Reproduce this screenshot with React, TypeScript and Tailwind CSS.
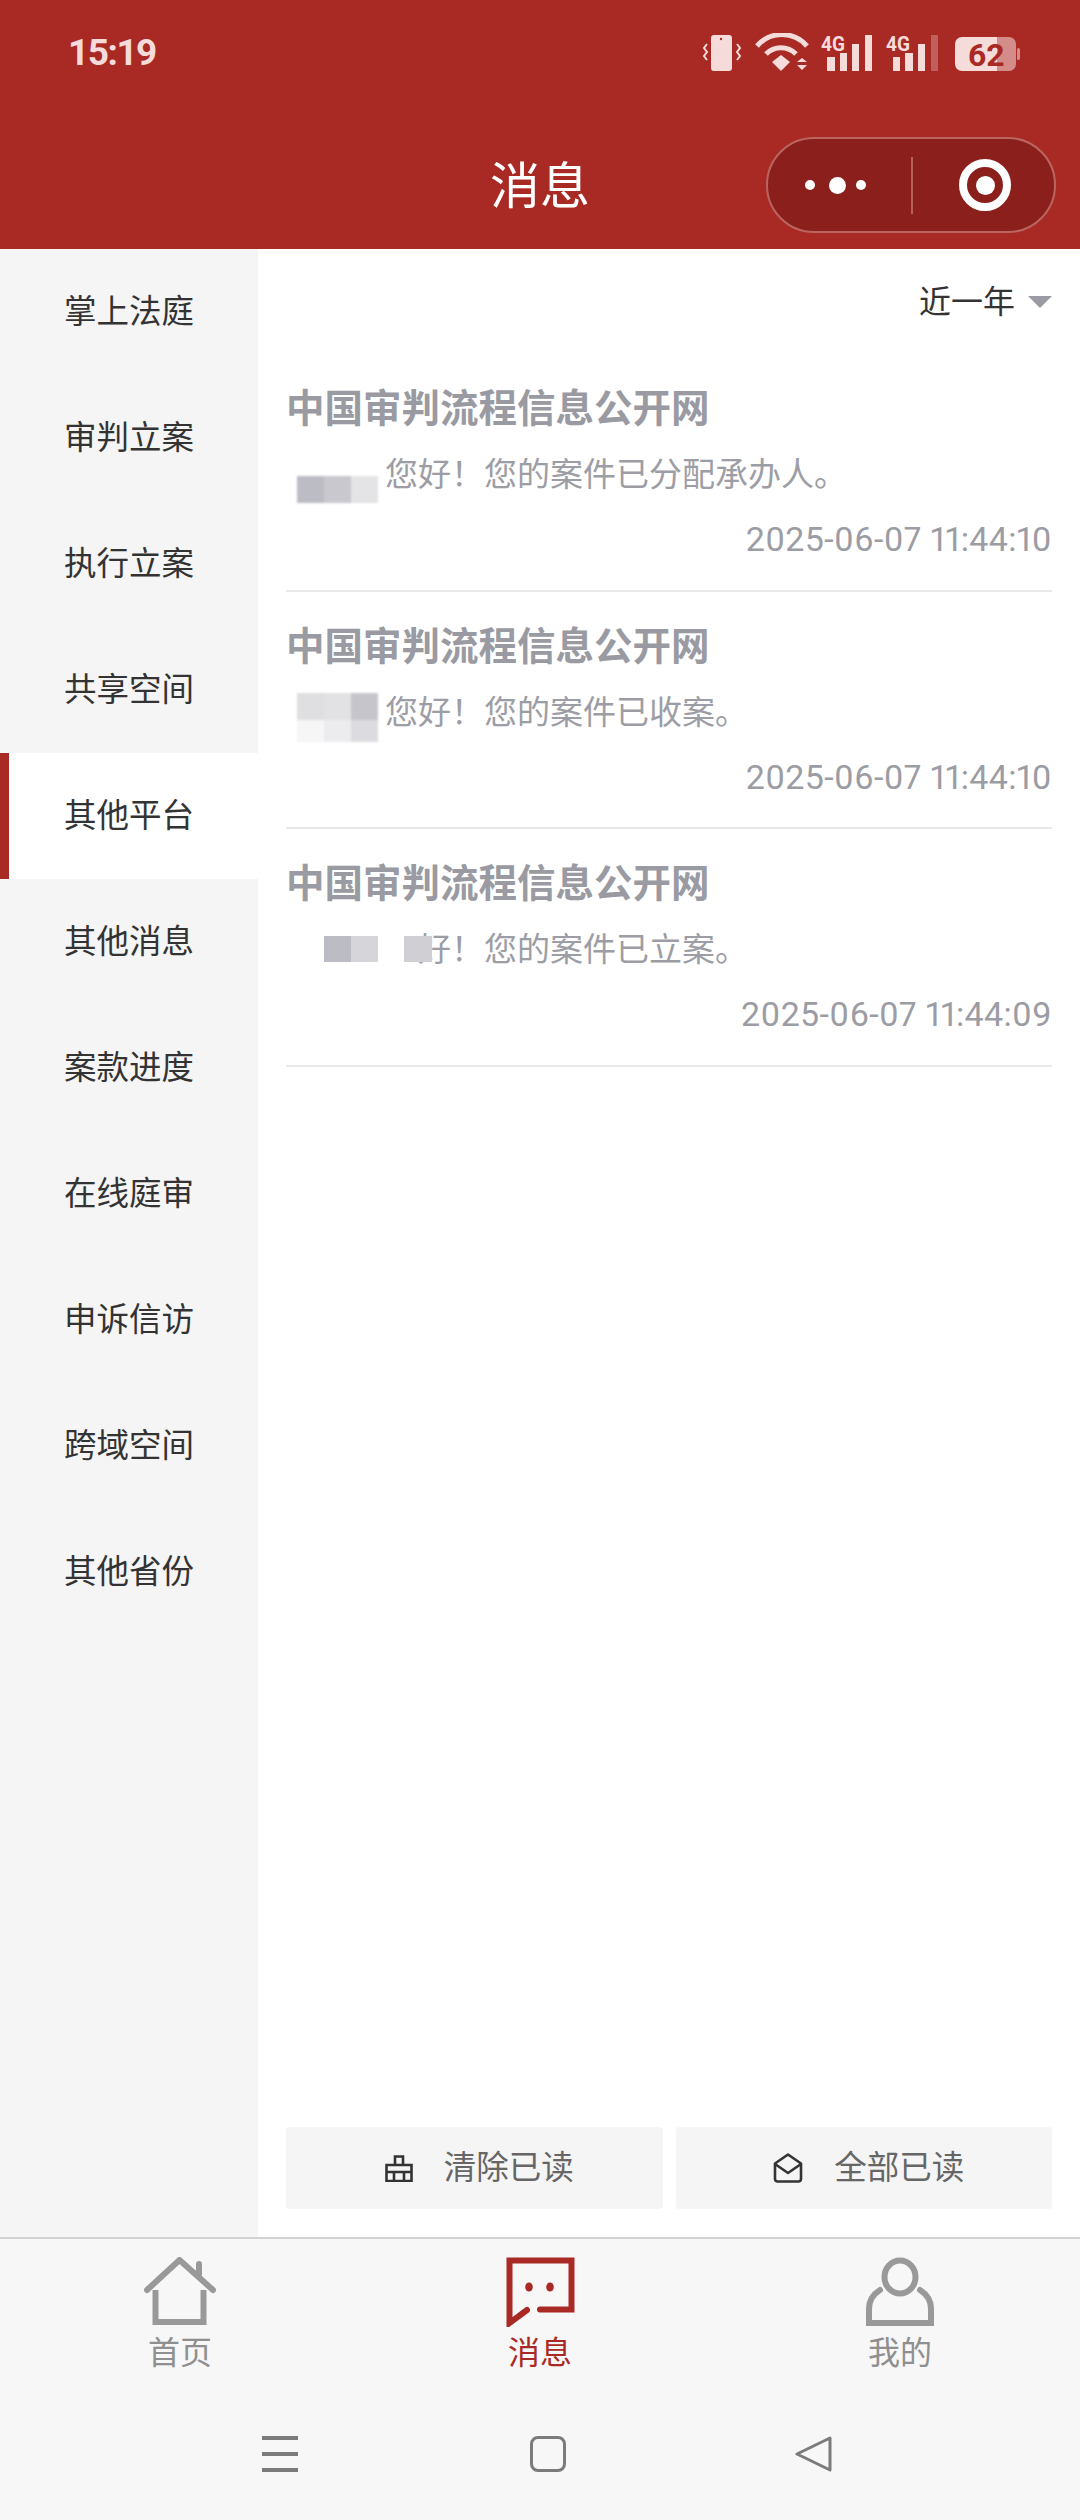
const CJK = 'font-["Noto_Sans_CJK_SC",sans-serif]';

const sideItems = ['掌上法庭', '审判立案', '执行立案', '共享空间', '其他平台', '其他消息', '案款进度', '在线庭审', '申诉信访', '跨域空间', '其他省份'];

function StatusIcons() {
  return (
    <svg width="322" height="40" viewBox="700 33 322 40" className="block">
      <g fill="#f5dcdb">
        {/* vibrate */}
        <rect x="711" y="35" width="21" height="36" rx="3" />
        <circle cx="721" cy="39" r="1.2" fill="#a92a24" />
        <path d="M707 44l-3 4 3 4-3 4 3 4M737 44l3 4-3 4 3 4-3 4" fill="none" stroke="#f5dcdb" strokeWidth="2" />
        {/* wifi */}
        <path d="M757 46a33 33 0 0 1 50 0" fill="none" stroke="#f5dcdb" strokeWidth="5" />
        <path d="M766 54a21 21 0 0 1 30 0" fill="none" stroke="#f5dcdb" strokeWidth="5" />
        <path d="M772 62l9-7 9 7-9 9z" />
        <path d="M802 58l5 4h-10zM802 70l5-5h-10z" />
        {/* signal 1 */}
        <text x="821" y="51" fontSize="20" fontWeight="700" fontFamily="Roboto, sans-serif" textLength="24" lengthAdjust="spacingAndGlyphs">4G</text>
        <rect x="827" y="57" width="8" height="14" />
        <rect x="840" y="53" width="7" height="18" />
        <rect x="852" y="44" width="7" height="27" />
        <rect x="865" y="35" width="7" height="36" />
        {/* signal 2 */}
        <text x="886" y="51" fontSize="20" fontWeight="700" fontFamily="Roboto, sans-serif" textLength="24" lengthAdjust="spacingAndGlyphs">4G</text>
        <rect x="893" y="57" width="7" height="14" />
        <rect x="905" y="53" width="8" height="18" />
        <rect x="918" y="44" width="7" height="27" />
        <rect x="931" y="35" width="7" height="36" opacity="0.3" />
        {/* battery */}
        <path d="M997 37h12a7 7 0 0 1 7 7v20a7 7 0 0 1-7 7h-12z" opacity="0.55" />
        <rect x="1017" y="48" width="3" height="12" rx="1.5" opacity="0.55" />
        <path d="M962 37h35v34h-35a7 7 0 0 1-7-7v-20a7 7 0 0 1 7-7z" />
        <text x="968" y="66" fontSize="32" fontWeight="700" fontFamily="Roboto, sans-serif" fill="#a92a24">62</text>
      </g>
    </svg>
  );
}

function Capsule() {
  return (
    <div className="flex h-[96px] w-[290px] items-center rounded-full border-2 border-[#bb6560] bg-[#8a1f1b]">
      <div className="flex w-[143px] items-center justify-end pr-[45px]">
        <span className="mr-[14px] h-[10px] w-[10px] rounded-full bg-white" />
        <span className="mr-[10px] h-[17px] w-[17px] rounded-full bg-white" />
        <span className="h-[10px] w-[10px] rounded-full bg-white" />
      </div>
      <div className="h-[57px] w-[2px] bg-[#b8605a]" />
      <div className="flex flex-1 items-center justify-center pl-[3px]">
        <div className="flex h-[52px] w-[52px] items-center justify-center rounded-full border-[8px] border-white">
          <span className="h-[19px] w-[19px] rounded-full bg-white" />
        </div>
      </div>
    </div>
  );
}

function Mosaic1() {
  return (
    <div className="absolute left-[11px] top-[26px] flex blur-[1px]">
      <div className="h-[27px] w-[27px] bg-[#bcbcc4]" />
      <div className="h-[27px] w-[27px] bg-[#c8c8ce]" />
      <div className="h-[27px] w-[27px] bg-[#e4e4e6]" />
    </div>
  );
}

function Mosaic2() {
  return (
    <div className="absolute left-[11px] top-[5px] grid grid-cols-[27px_27px_27px] grid-rows-[27px_22px] blur-[1px]">
      <div className="bg-[#dfdfe2]" />
      <div className="bg-[#e2e2e5]" />
      <div className="bg-[#c5c5cb]" />
      <div className="bg-[#f6f6f7]" />
      <div className="bg-[#ececee]" />
      <div className="bg-[#dcdce0]" />
    </div>
  );
}

function Mosaic3() {
  return (
    <div className="absolute left-[38px] top-[11px] flex blur-[0.5px]">
      <div className="h-[26px] w-[27px] bg-[#bcbcc4]" />
      <div className="h-[26px] w-[27px] bg-[#d6d6da]" />
      <div className="h-[26px] w-[26px]" />
      <div className="h-[26px] w-[28px] bg-[#cfcfd4]" />
    </div>
  );
}

const messages = [
  { gap: 'w-[99px]', text: '您好！您的案件已分配承办人。', time: '2025-06-07 11:44:10', mosaic: <Mosaic1 /> },
  { gap: 'w-[99px]', text: '您好！您的案件已收案。', time: '2025-06-07 11:44:10', mosaic: <Mosaic2 /> },
  { gap: 'w-[132px]', text: '好！您的案件已立案。', time: '2025-06-07 11:44:09', mosaic: <Mosaic3 /> },
];

function BroomIcon() {
  return (
    <svg width="28" height="27" viewBox="0 0 28 27" fill="none" stroke="#333" strokeWidth="2.6">
      <path d="M10 10V1.500h8V10M1.500 10h25v16h-25zM1.500 17h25M9 17v9M19 17v9" />
    </svg>
  );
}

function MailIcon() {
  return (
    <svg width="30" height="30" viewBox="0 0 30 30" fill="none" stroke="#333" strokeWidth="2.6" strokeLinejoin="round">
      <path d="M2 10.500 15 1.500l13 9V26a2.500 2.500 0 0 1-2.500 2.500h-21A2.500 2.500 0 0 1 2 26z" />
      <path d="M2 11l13 9 13-9" />
    </svg>
  );
}

function HomeIcon() {
  return (
    <svg width="72" height="70" viewBox="0 0 72 70" fill="none" stroke="#999" strokeWidth="6" strokeLinecap="round">
      <path d="M3 33 35.500 3 69 33" />
      <path d="M55 7v10" />
      <path d="M11.500 33v32h48V33" strokeLinecap="butt" />
    </svg>
  );
}

function ChatIcon() {
  return (
    <svg width="72" height="70" viewBox="0 0 72 70" fill="none" stroke="#a92a24" strokeWidth="6">
      <path d="M23 53 5.500 66V3.500h62v49H36" strokeLinecap="round" />
      <ellipse cx="25" cy="30" rx="3.800" ry="4.500" fill="#a92a24" stroke="none" />
      <ellipse cx="46" cy="30" rx="3.800" ry="4.500" fill="#a92a24" stroke="none" />
    </svg>
  );
}

function UserIcon() {
  return (
    <svg width="72" height="70" viewBox="0 0 72 70" fill="none" stroke="#999" strokeWidth="6">
      <ellipse cx="36" cy="20" rx="15.500" ry="16.500" />
      <path d="M16 33C8 38 5 44 5 52v14h62V52c0-8-3-14-11-19" strokeLinecap="round" />
    </svg>
  );
}

function Tab({ icon, label, active }: { icon: React.ReactNode; label: string; active?: boolean }) {
  return (
    <div className="flex flex-col items-center">
      {icon}
      <span className={`mt-[1px] text-[32px] leading-[44px] ${active ? 'text-[#a92a24]' : 'text-[#8f8f8f]'}`}>{label}</span>
    </div>
  );
}

export default function App() {
  return (
    <div className={`flex h-[2520px] w-[1080px] flex-col overflow-hidden bg-white ${CJK}`}>
      {/* header */}
      <div className="h-[249px] bg-[#a92a24]">
        <div className="flex items-center justify-between pl-[68px] pr-[58px] pt-[33px]">
          <span className="font-['Roboto',sans-serif] text-[37px] font-bold leading-[40px] tracking-[-1.5px] text-[#f5dcdb]">15:19</span>
          <StatusIcons />
        </div>
        <div className="relative mt-[64px] flex h-[96px] items-center justify-center">
          <span className="pb-[6px] text-[50px] leading-[60px] text-white">消息</span>
          <div className="absolute right-[24px] top-0">
            <Capsule />
          </div>
        </div>
      </div>

      <div className="flex min-h-0 flex-1">
        {/* sidebar */}
        <div className="w-[258px] bg-[#f5f5f5]">
          {sideItems.map((item, i) => (
            <div
              key={item}
              className={`flex h-[126px] items-center pb-[6px] pl-[64px] text-[32.5px] text-[#333] ${i === 4 ? 'border-l-[9px] border-[#a92a24] bg-white !pl-[55px]' : ''}`}
            >
              {item}
            </div>
          ))}
        </div>

        {/* list */}
        <div className="flex min-w-0 flex-1 flex-col px-[28px]">
          <div className="flex h-[105px] justify-end pt-[28px]">
            <span className="text-[32px] leading-[44px] text-[#333]">近一年</span>
            <span className="ml-[13px] mt-[19px] h-0 w-0 border-x-[12px] border-t-[12px] border-x-transparent border-t-[#9b9ba3]" />
          </div>
          {messages.map((m, i) => (
            <div key={i} className="h-[237.5px] border-b-2 border-[#e9e9e9] pt-[29px]">
              <div className="text-[38.5px] font-bold leading-[44px] text-[#9a9aa2]">中国审判流程信息公开网</div>
              <div className="mt-[23px] flex text-[33px] leading-[44px] text-[#9d9da5]">
                <div className={`relative h-[44px] ${m.gap}`}>{m.mosaic}</div>
                <span>{m.text}</span>
              </div>
              <div className="mt-[23px] text-right font-['Roboto',sans-serif] text-[34px] font-normal leading-[44px] tracking-[0.35px] text-[#9c9ca4] proportional-nums">{m.time}</div>
            </div>
          ))}
          <div className="mb-[28px] mt-auto grid grid-cols-2 gap-[13px]">
            <div className="flex h-[82px] items-center justify-center gap-[31px] rounded-[4px] bg-[#f5f5f5] pb-[6px] pl-[10px] text-[32.5px] text-[#666]">
              <span className="pt-[6px]"><BroomIcon /></span>
              <span>清除已读</span>
            </div>
            <div className="flex h-[82px] items-center justify-center gap-[31px] rounded-[4px] bg-[#f5f5f5] pb-[6px] pl-[10px] text-[32.5px] text-[#666]">
              <span className="pt-[6px]"><MailIcon /></span>
              <span>全部已读</span>
            </div>
          </div>
        </div>
      </div>

      {/* tab bar */}
      <div className="h-[283px] border-t-2 border-[#d2d2d2] bg-[#f7f7f8]">
        <div className="grid grid-cols-3 pt-[18px]">
          <Tab icon={<HomeIcon />} label="首页" />
          <Tab icon={<ChatIcon />} label="消息" active />
          <Tab icon={<UserIcon />} label="我的" />
        </div>
        <div className="mt-[64px] flex items-center gap-[232px] pl-[262px]">
          <div className="flex h-[36px] w-[36px] flex-col justify-between">
            <span className="h-[4px] bg-[#7b7b7b]" />
            <span className="h-[4px] bg-[#7b7b7b]" />
            <span className="h-[4px] bg-[#7b7b7b]" />
          </div>
          <div className="h-[36px] w-[36px] rounded-[8px] border-[3px] border-[#7b7b7b]" />
          <svg width="37" height="36" viewBox="0 0 37 36" fill="none" stroke="#7b7b7b" strokeWidth="3" strokeLinejoin="round" className="-ml-[3px]">
            <path d="M35 2 2 18l33 16z" />
          </svg>
        </div>
      </div>
    </div>
  );
}
